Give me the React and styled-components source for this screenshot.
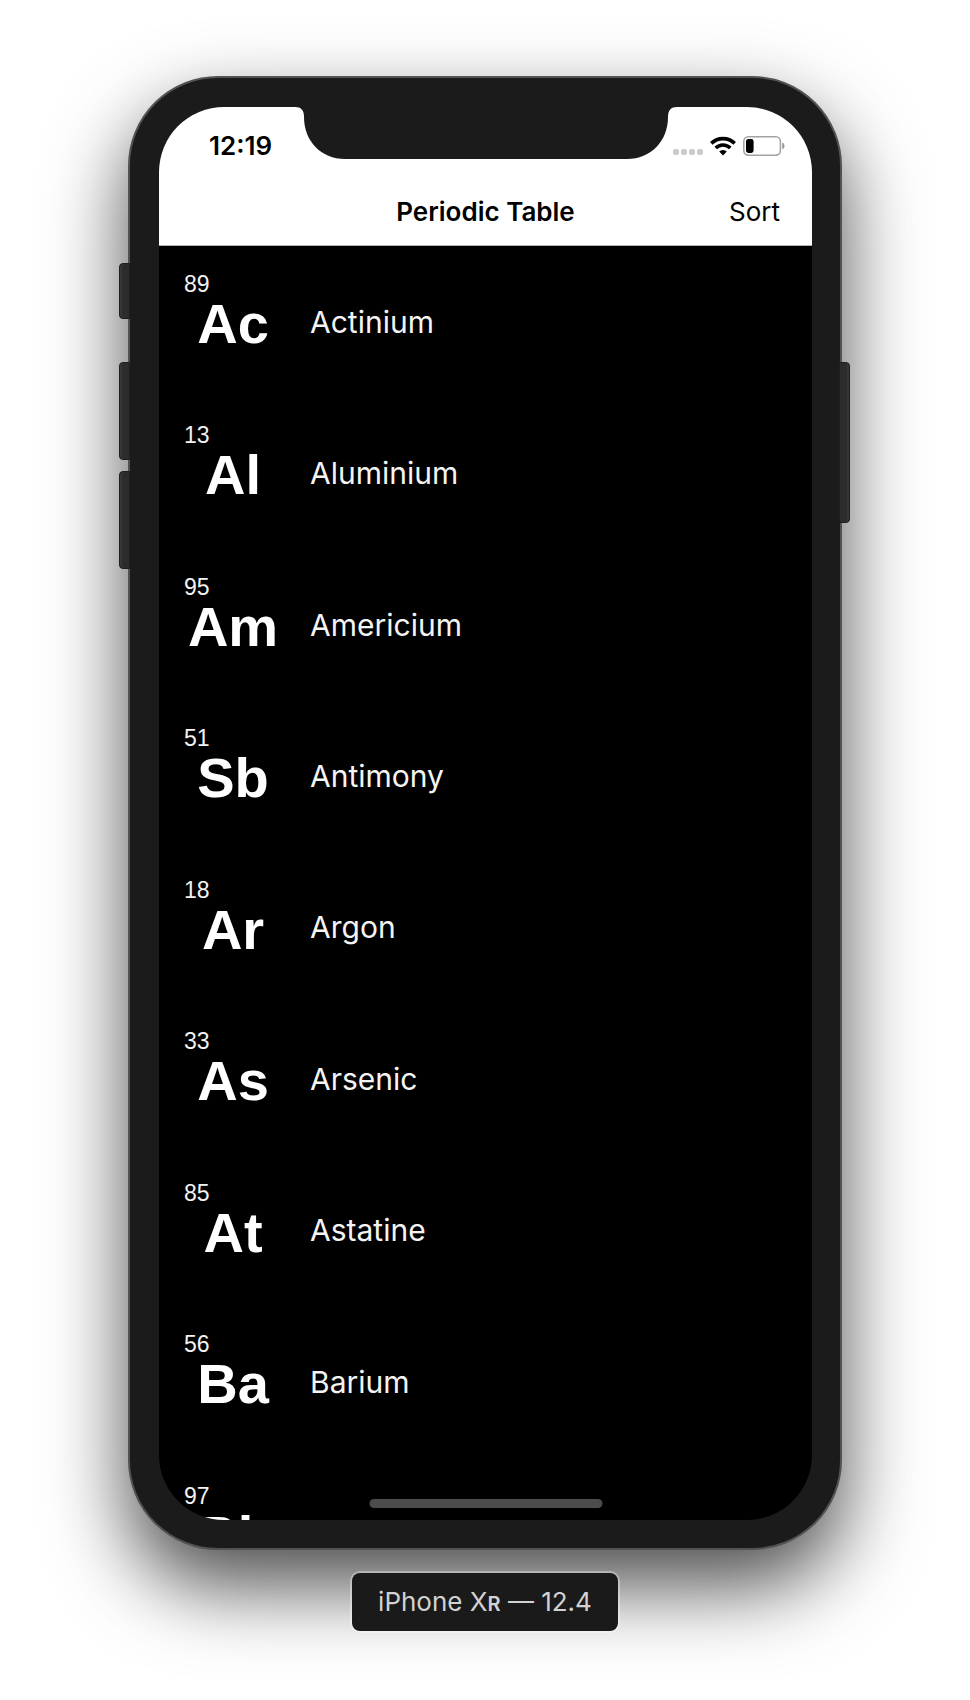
import React from "react";
import styled, { createGlobalStyle } from "styled-components";

const GlobalStyle = createGlobalStyle`
  *, *::before, *::after { box-sizing: border-box; }
  body {
    margin: 0;
    background: #fff;
    font-family: Inter, "Liberation Sans", sans-serif;
  }
`;

const Page = styled.main`
  display: flex;
  flex-direction: column;
  align-items: center;
  padding: 76px 16px 72px;
  overflow: hidden;
`;

const Device = styled.div`
  display: flex;
  align-items: flex-start;
  width: 100%;
  max-width: 734px;
`;

const ButtonRail = styled.div`
  position: relative;
  z-index: 1;
  flex: none;
  display: flex;
  flex-direction: column;
  gap: 11px;
  width: ${(p) => (p.$side === "left" ? 11 : 13)}px;
  padding-top: ${(p) => (p.$side === "left" ? 187 : 286)}px;
  ${(p) =>
    p.$side === "left" ? "margin-left: 1px; margin-right: -2px;" : "margin-left: -3px; padding-right: 2px;"}
`;

const HardwareKey = styled.span`
  height: ${(p) => p.$length}px;
  margin-bottom: ${(p) => p.$after || 0}px;
  background: #2c2c2c;
  border: 1px solid #1f1f1f;
  box-shadow: inset ${(p) => (p.$side === "left" ? 2 : -2)}px 0 0 #373737;
  border-radius: ${(p) => (p.$side === "left" ? "4px 0 0 4px" : "0 4px 4px 0")};
`;

const Body = styled.div`
  flex: 1;
  min-width: 0;
  padding: 29px 28px 28px 29px;
  background: #1b1b1b;
  border: 2px solid #525252;
  border-radius: 90px;
  box-shadow: 0 36px 80px rgba(0, 0, 0, 0.7);
`;

const Screen = styled.div`
  position: relative;
  display: flex;
  flex-direction: column;
  height: 1413px;
  overflow: hidden;
  background: #000;
  border-radius: 65px;
`;

const Notch = styled.svg`
  position: absolute;
  top: 0;
  left: 50%;
  transform: translateX(-50%);
`;

const Header = styled.header`
  flex: none;
  background: #fff;
  color: #000;
  border-bottom: 1px solid #b2b2b2;
`;

const StatusBar = styled.div`
  display: flex;
  align-items: center;
  justify-content: space-between;
  height: 69px;
  padding: 9px 27px 0 50px;
`;

const Clock = styled.time`
  font-size: 26px;
  line-height: 30px;
  font-weight: 600;
`;

const StatusIcons = styled.div`
  display: flex;
  align-items: center;
  gap: 7px;
`;

const NavBar = styled.nav`
  display: grid;
  grid-template-columns: 1fr auto 1fr;
  align-items: center;
  height: 69px;
  padding: 2px 32px 0;
`;

const Title = styled.h1`
  grid-column: 2;
  margin: 0;
  font-size: 26px;
  line-height: 32px;
  font-weight: 600;
`;

const SortButton = styled.button`
  justify-self: end;
  padding: 0;
  border: 0;
  background: none;
  color: #000;
  font: 400 26px/32px Inter, "Liberation Sans", sans-serif;
  cursor: pointer;
`;

const ElementList = styled.ul`
  flex: none;
  display: grid;
  grid-auto-rows: 1fr;
  min-height: 1363px;
  margin: 0;
  padding: 0;
  list-style: none;
  color: #fff;
`;

const ElementRow = styled.li`
  display: grid;
  grid-template-columns: 98px 1fr;
  column-gap: 28px;
  padding: 0 25px;
`;

const Tile = styled.div`
  display: flex;
  flex-direction: column;
  padding-top: 25px;
  font-family: "Liberation Sans", Arial, sans-serif;
`;

const AtomicNumber = styled.span`
  font-size: 23px;
  line-height: 26px;
  color: #f2f2f2;
`;

const Symbol = styled.strong`
  font-size: 56px;
  line-height: 54px;
  font-weight: 700;
  text-align: center;
`;

const ElementName = styled.span`
  align-self: center;
  font-size: 30px;
  line-height: 38px;
  color: #f4f4f4;
`;

const HomeIndicator = styled.div`
  position: absolute;
  bottom: 12px;
  left: 50%;
  width: 233px;
  height: 9px;
  transform: translateX(-50%);
  background: #4c4c4c;
  border-radius: 5px;
`;

const DeviceLabel = styled.p`
  position: relative;
  margin: 23px 0 0;
  padding: 13px 26px 11px;
  background: #1a1a1a;
  border-radius: 8px;
  box-shadow: 0 0 0 2px rgba(255, 255, 255, 0.35);
  color: #d2d2d2;
  font-size: 26px;
  line-height: 32px;
`;

const SmallCap = styled.span`
  font-size: 20px;
  font-weight: 600;
`;

const elements = [
  { number: 89, symbol: "Ac", name: "Actinium" },
  { number: 13, symbol: "Al", name: "Aluminium" },
  { number: 95, symbol: "Am", name: "Americium" },
  { number: 51, symbol: "Sb", name: "Antimony" },
  { number: 18, symbol: "Ar", name: "Argon" },
  { number: 33, symbol: "As", name: "Arsenic" },
  { number: 85, symbol: "At", name: "Astatine" },
  { number: 56, symbol: "Ba", name: "Barium" },
  { number: 97, symbol: "Bk", name: "Berkelium" },
];

function SignalIcon() {
  return (
    <svg width="30" height="20" viewBox="0 0 30 20" fill="#cbcbcb" aria-hidden="true">
      {[0, 8, 16, 24].map((x) => (
        <rect key={x} x={x} y="13" width="6" height="6" rx="2" />
      ))}
    </svg>
  );
}

function WifiIcon() {
  return (
    <svg width="26" height="20" viewBox="0 0 26 20" aria-hidden="true">
      <g fill="none" stroke="#000" strokeWidth="3.6">
        <path d="M1.3 7.4 A16.6 16.6 0 0 1 24.7 7.4" />
        <path d="M5.7 12 A10.3 10.3 0 0 1 20.3 12" />
      </g>
      <path d="M13 19.4 L9.2 15.6 A5.4 5.4 0 0 1 16.8 15.6 Z" fill="#000" />
    </svg>
  );
}

function BatteryIcon() {
  return (
    <svg width="42" height="20" viewBox="0 0 42 20" aria-hidden="true">
      <rect x="0.8" y="0.8" width="36.6" height="18.4" rx="4.6" fill="none" stroke="#a2a2a2" strokeWidth="1.5" />
      <rect x="3" y="3" width="7.6" height="14" rx="2.4" fill="#000" />
      <path d="M39.2 6.6 Q41.6 7.6 41.6 10 Q41.6 12.4 39.2 13.4 Z" fill="#999" />
    </svg>
  );
}

export default function App() {
  return (
    <>
      <GlobalStyle />
      <Page>
        <Device>
          <ButtonRail $side="left">
            <HardwareKey $side="left" $length={56} $after={32} />
            <HardwareKey $side="left" $length={98} />
            <HardwareKey $side="left" $length={98} />
          </ButtonRail>
          <Body>
            <Screen>
              <Header>
                <StatusBar>
                  <Clock>12:19</Clock>
                  <StatusIcons>
                    <SignalIcon />
                    <WifiIcon />
                    <BatteryIcon />
                  </StatusIcons>
                </StatusBar>
                <NavBar>
                  <Title>Periodic Table</Title>
                  <SortButton type="button">Sort</SortButton>
                </NavBar>
              </Header>
              <ElementList>
                {elements.map((el) => (
                  <ElementRow key={el.number}>
                    <Tile>
                      <AtomicNumber>{el.number}</AtomicNumber>
                      <Symbol>{el.symbol}</Symbol>
                    </Tile>
                    <ElementName>{el.name}</ElementName>
                  </ElementRow>
                ))}
              </ElementList>
              <Notch width="382" height="52" viewBox="0 0 382 52" aria-hidden="true">
                <path
                  d="M0 0 C6 0 9 3 9 10 C9 34 26 52 50 52 H332 C356 52 373 34 373 10 C373 3 376 0 382 0 Z"
                  fill="#1b1b1b"
                />
              </Notch>
              <HomeIndicator />
            </Screen>
          </Body>
          <ButtonRail $side="right">
            <HardwareKey $side="right" $length={161} />
          </ButtonRail>
        </Device>
        <DeviceLabel>
          iPhone X<SmallCap>R</SmallCap> — 12.4
        </DeviceLabel>
      </Page>
    </>
  );
}
